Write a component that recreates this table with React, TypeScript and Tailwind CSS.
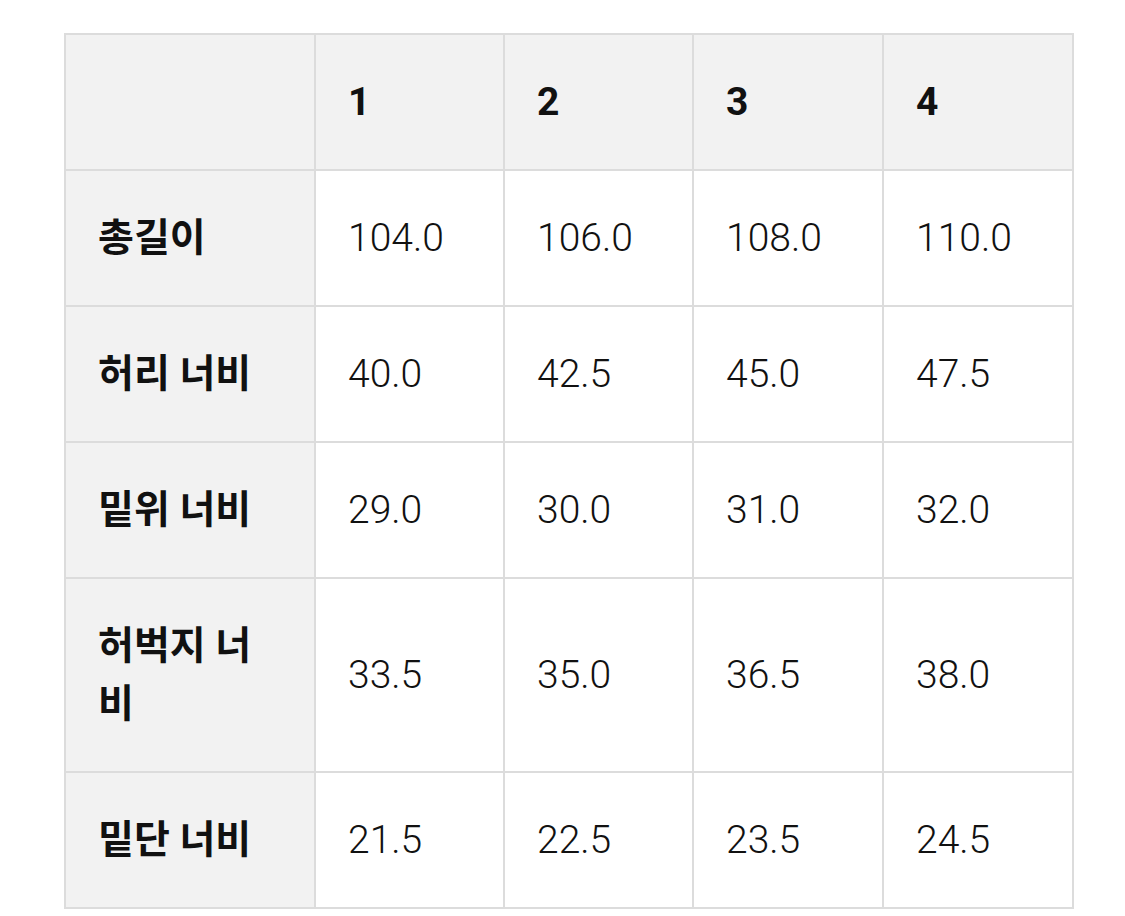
import React from 'react';

const header = ['1', '2', '3', '4'];

const rows: { label: string; values: string[] }[] = [
  { label: '총길이', values: ['104.0', '106.0', '108.0', '110.0'] },
  { label: '허리 너비', values: ['40.0', '42.5', '45.0', '47.5'] },
  { label: '밑위 너비', values: ['29.0', '30.0', '31.0', '32.0'] },
  { label: '허벅지 너비', values: ['33.5', '35.0', '36.5', '38.0'] },
  { label: '밑단 너비', values: ['21.5', '22.5', '23.5', '24.5'] },
];

const cell = 'border-2 border-[#dcdcdc] pl-[32px] pr-[40px] py-[38px] text-left align-middle leading-[58px]';

export default function App() {
  return (
    <div
      className="min-h-[916px] w-[1125px] bg-white pl-[64px] pt-[33px] text-[#111111]"
      style={{ fontFamily: 'Roboto, "Noto Sans CJK KR", "Noto Sans", sans-serif' }}
    >
      <table className="w-[1010px] table-fixed border-collapse text-[39px]">
        <colgroup>
          <col className="w-[250px]" />
          <col className="w-[189px]" />
          <col className="w-[189px]" />
          <col className="w-[190px]" />
          <col className="w-[190px]" />
        </colgroup>
        <thead>
          <tr className="bg-[#f2f2f2]">
            <th className={cell}></th>
            {header.map(h => (
              <th key={h} className={`${cell} font-bold`}>
                {h}
              </th>
            ))}
          </tr>
        </thead>
        <tbody>
          {rows.map(r => (
            <tr key={r.label}>
              <th className={`${cell} bg-[#f2f2f2] font-semibold`}>{r.label}</th>
              {r.values.map((v, i) => (
                <td key={i} className={`${cell} font-light`}>
                  {v}
                </td>
              ))}
            </tr>
          ))}
        </tbody>
      </table>
    </div>
  );
}
